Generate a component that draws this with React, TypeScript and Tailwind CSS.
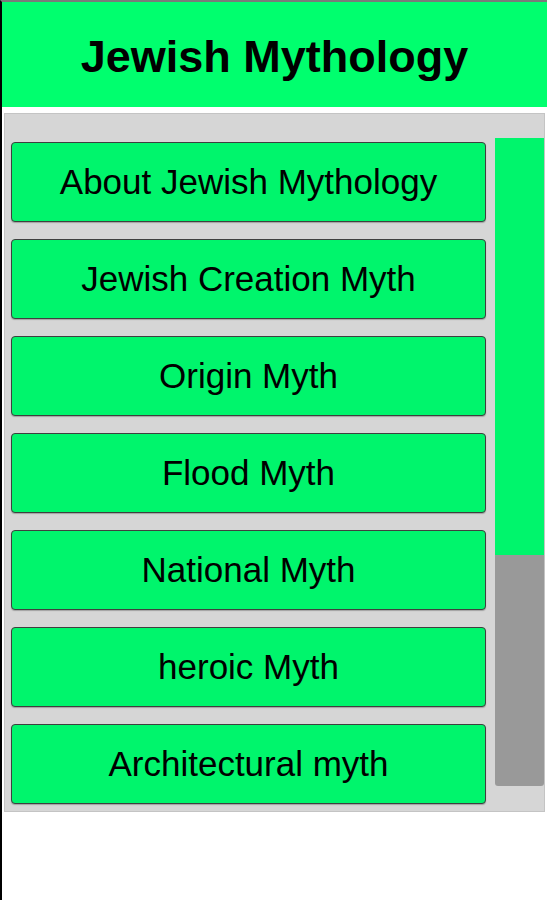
import React from "react";

const items = [
  "About Jewish Mythology",
  "Jewish Creation Myth",
  "Origin Myth",
  "Flood Myth",
  "National Myth",
  "heroic Myth",
  "Architectural myth",
];

export default function App() {
  return (
    <div
      className="w-[547px] h-[900px] bg-white border-l-2 border-black border-t-2 border-t-[#7a7a7a] overflow-hidden"
      style={{ fontFamily: '"Liberation Sans", Arial, sans-serif' }}
    >
      <div className="h-[105px] pt-[4px] bg-[#00ff6e] flex items-center justify-center">
        <h1 className="text-[45px] font-bold text-black leading-none">Jewish Mythology</h1>
      </div>
      <div className="mt-[6px] ml-[2px] w-[541px] h-[699px] bg-[#d6d6d6] border border-[#c4c4c4] flex">
        <div className="pt-[28px] pl-[6px] flex flex-col gap-[17px]">
          {items.map((t) => (
            <div
              key={t}
              className="w-[475px] h-[80px] bg-[#00f56c] border border-[#3f3f3f] rounded-[4px] shadow-[0_1px_1px_rgba(0,0,0,0.25)] flex items-center justify-center text-[35px] text-black"
            >
              {t}
            </div>
          ))}
        </div>
        <div className="ml-[9px] mt-[24px] w-[50px] h-[648px] flex flex-col rounded-b-[3px] overflow-hidden">
          <div className="h-[417px] bg-[#00f56c]" />
          <div className="flex-1 bg-[#999999]" />
        </div>
      </div>
    </div>
  );
}
